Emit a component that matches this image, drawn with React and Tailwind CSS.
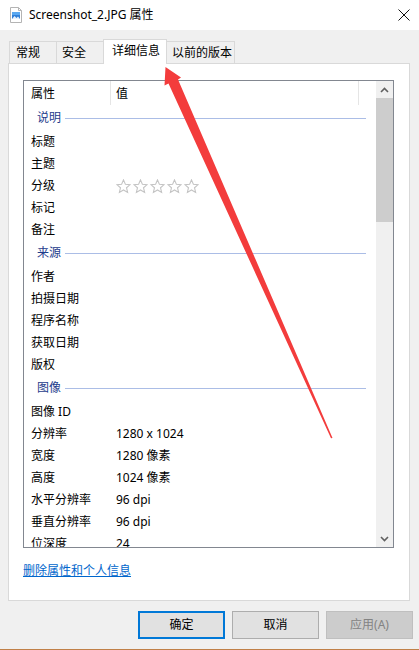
import React from "react";

const rows = [
  { group: "说明" },
  { name: "标题" },
  { name: "主题" },
  { name: "分级", stars: true },
  { name: "标记" },
  { name: "备注" },
  { group: "来源" },
  { name: "作者" },
  { name: "拍摄日期" },
  { name: "程序名称" },
  { name: "获取日期" },
  { name: "版权" },
  { group: "图像" },
  { name: "图像 ID" },
  { name: "分辨率", value: "1280 x 1024" },
  { name: "宽度", value: "1280 像素" },
  { name: "高度", value: "1024 像素" },
  { name: "水平分辨率", value: "96 dpi" },
  { name: "垂直分辨率", value: "96 dpi" },
  { name: "位深度", value: "24" },
];

function FileIcon() {
  return (
    <svg width="16" height="16" viewBox="0 0 16 16">
      <path d="M2.5 0.5h8l3 3v12h-11z" fill="#fff" stroke="#b4b4b4" />
      <path d="M10.5 0.5v3h3" fill="none" stroke="#b4b4b4" />
      <rect x="4" y="5" width="8" height="7" fill="#2f7fd8" />
      <rect x="4" y="5" width="8" height="3" fill="#5aa8f0" />
      <path d="M4 12l2.5-3 2 2 1.5-1.5 2 2.5z" fill="#e8f2fc" />
    </svg>
  );
}

function Stars() {
  return (
    <div className="flex gap-[2px]">
      {[0, 1, 2, 3, 4].map((i) => (
        <svg key={i} width="15" height="15" viewBox="0 0 14 14">
          <path
            d="M7 0.8l1.75 4.1 4.45.35-3.4 2.9 1.05 4.35L7 10.2l-3.85 2.3 1.05-4.35-3.4-2.9 4.45-.35z"
            fill="#fff"
            stroke="#c4c4c4"
            strokeWidth="1"
            strokeLinejoin="miter"
          />
        </svg>
      ))}
    </div>
  );
}

function Chevron({ down }) {
  return (
    <svg width="9" height="6" viewBox="0 0 9 6" className={down ? "rotate-180" : ""}>
      <path d="M1 5l3.5-3.5L8 5" fill="none" stroke="#606060" strokeWidth="1.6" />
    </svg>
  );
}

export default function App() {
  return (
    <div className="relative flex h-[650px] w-[419px] flex-col overflow-hidden bg-[#f0f0f0] font-['Noto_Sans','Noto_Sans_CJK_SC',sans-serif] text-[12px] text-black">
      {/* title bar */}
      <div className="flex h-[30px] shrink-0 items-center bg-white pl-[8px] pr-[9px]">
        <FileIcon />
        <span className="ml-[5px] text-[12px]">Screenshot_2.JPG 属性</span>
        <svg className="ml-auto" width="12" height="12" viewBox="0 0 12 12">
          <path d="M0.5 0.5l11 11M11.5 0.5l-11 11" stroke="#111" strokeWidth="1" />
        </svg>
      </div>

      {/* tabs */}
      <div className="flex items-end pl-[9px] pt-[9px]">
        <div className="flex h-[22px] w-[48px] items-center border border-b-0 border-[#d9d9d9] pl-[6px]">常规</div>
        <div className="-ml-px flex h-[22px] w-[48px] items-center border border-b-0 border-[#d9d9d9] pl-[5px]">安全</div>
        <div className="relative z-10 -mb-px -ml-px flex h-[25px] w-[64px] items-center border border-b-0 border-[#d9d9d9] bg-white pb-[2px] pl-[8px]">
          详细信息
        </div>
        <div className="-ml-px flex h-[22px] w-[69px] items-center border border-b-0 border-[#d9d9d9] pl-[5px]">以前的版本</div>
      </div>

      {/* panel */}
      <div className="ml-[8px] h-[538px] w-[402px] border border-[#d9d9d9] bg-white pl-[14px] pt-[16px]">
        <div className="flex h-[468px] w-[371px] border border-[#828790]">
          <div className="flex-1 overflow-hidden">
            <div className="flex h-[24px] items-center pt-[2px]">
              <div className="flex h-full w-[86px] items-center pl-[7px]">属性</div>
              <div className="-mt-[2px] h-[24px] w-px bg-[#e5e5e5]" />
              <div className="w-[247px] pl-[5px]">值</div>
              <div className="-mt-[2px] h-[24px] w-px bg-[#e5e5e5]" />
            </div>
            {rows.map((r, i) =>
              r.group ? (
                <div key={i} className="flex h-[25px] items-center pl-[13px] pr-[10px] pt-[1px]">
                  <span className="text-[#1e3c8c]">{r.group}</span>
                  <div className="ml-[4px] h-px flex-1 bg-[#abbde6]" />
                </div>
              ) : (
                <div key={i} className="flex h-[22px] items-center pt-[2px]">
                  <div className="w-[92px] shrink-0 pl-[7px]">{r.name}</div>
                  {r.stars ? <Stars /> : <div>{r.value}</div>}
                </div>
              )
            )}
          </div>
          <div className="flex w-[17px] flex-col bg-[#f0f0f0]">
            <div className="flex h-[17px] items-center justify-center">
              <Chevron />
            </div>
            <div className="h-[124px] bg-[#cdcdcd]" />
            <div className="flex-1" />
            <div className="flex h-[17px] items-center justify-center">
              <Chevron down />
            </div>
          </div>
        </div>
        <div className="mt-[14px]">
          <a className="text-[#0066cc] underline" href="#">删除属性和个人信息</a>
        </div>
      </div>

      {/* buttons */}
      <div className="mt-[10px] flex justify-end gap-[7px] pr-[6px]">
        <button className="flex h-[28px] w-[87px] items-center justify-center border-2 border-[#0078d7] bg-[#e1e1e1]">确定</button>
        <button className="flex h-[28px] w-[87px] items-center justify-center border border-[#adadad] bg-[#e1e1e1]">取消</button>
        <button className="flex h-[28px] w-[87px] items-center justify-center border border-[#bfbfbf] bg-[#cccccc] text-[#838383]">应用(A)</button>
      </div>

      <div className="flex-1" />
      <div className="h-px bg-[#c08048]" />

      {/* red annotation arrow */}
      <svg className="pointer-events-none absolute inset-0 z-20" width="419" height="650" viewBox="0 0 419 650">
        <polygon
          points="165.5,67 181,77.5 178,79.5 332.5,438 331,438.3 168.5,83.5 164.5,85.5"
          fill="#f33c3c"
        />
      </svg>
    </div>
  );
}
